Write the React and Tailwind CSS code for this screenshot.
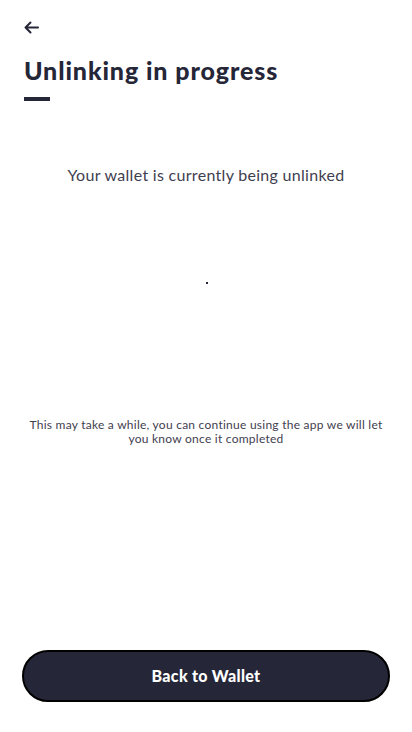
import React from 'react';

const App = () => {
  return (
    <div
      className="w-[412px] h-[732px] bg-white flex flex-col px-6 text-[#252638]"
      style={{ fontFamily: 'Lato, "Noto Sans", sans-serif' }}
    >
      <button className="mt-[20px] w-4 h-[15px] flex items-center">
        <svg width="15" height="13" viewBox="0 0 15 13" fill="none">
          <path d="M14 6.5H1.5M6.5 1.5L1.5 6.5L6.5 11.5" stroke="#252638" strokeWidth="2" strokeLinecap="round" strokeLinejoin="round" />
        </svg>
      </button>

      <h1 className="mt-[20px] text-[25px] leading-[30px] font-black tracking-[0.9px]">
        Unlinking in progress
      </h1>
      <div className="mt-[12px] w-[26px] h-1 bg-[#252638]" />

      <p className="mt-[64px] text-center text-[16px] leading-[20px] tracking-[0.3px] text-[#3f4050]">
        Your wallet is currently being unlinked
      </p>

      <div className="mt-[97px] flex justify-center">
        <div className="w-[2px] h-[2px] bg-[#252638] ml-[2px]" />
      </div>

      <p className="mt-[134px] -mx-[2px] text-center text-[12px] leading-[14px] tracking-[0.25px] text-[#3f4050]">
        This may take a while, you can continue using the app we will let you know once it completed
      </p>

      <div className="flex-1" />

      <button className="mb-[30px] -mx-[2px] h-[52px] rounded-full bg-[#252638] border-2 border-black text-white text-[16px] font-black tracking-[0.3px]">
        Back to Wallet
      </button>
    </div>
  );
};

export default App;
